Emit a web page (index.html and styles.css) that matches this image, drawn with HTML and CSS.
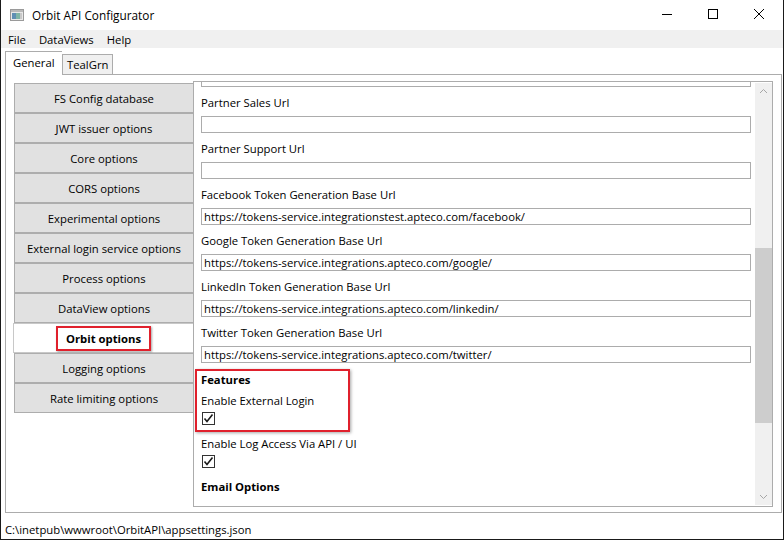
FILE: index.html
```html
<!DOCTYPE html>
<html lang="en">
<head>
  <meta charset="UTF-8">
  <title>Orbit API Configurator</title>
  <link rel="stylesheet" href="styles.css">
</head>
<body>
  <div class="window">
    <div class="titlebar">
      <svg class="app-icon" width="14" height="12" viewBox="0 0 14 12">
        <rect x="0.5" y="0.5" width="13" height="11" fill="#e8e8e8" stroke="#9a9a9a"/>
        <rect x="1" y="1" width="12" height="2" fill="#b9b9b9"/>
        <rect x="2" y="4" width="4" height="6" fill="#5f8fb4"/>
        <rect x="6" y="4" width="4" height="6" fill="#7fb5a6"/>
        <rect x="10" y="4" width="2" height="6" fill="#c8c8c8"/>
      </svg>
      <span class="title">Orbit API Configurator</span>
      <div class="controls">
        <svg width="46" height="30" viewBox="0 0 46 30"><line x1="18" y1="14.5" x2="28" y2="14.5" stroke="#000"/></svg>
        <svg width="46" height="30" viewBox="0 0 46 30"><rect x="18.5" y="9.5" width="9" height="9" fill="none" stroke="#000"/></svg>
        <svg width="46" height="30" viewBox="0 0 46 30"><path d="M18 9 L28 19 M28 9 L18 19" stroke="#000" stroke-width="1"/></svg>
      </div>
    </div>

    <div class="menubar">
      <span>File</span>
      <span>DataViews</span>
      <span>Help</span>
    </div>

    <div class="tabs">
      <div class="tabstrip">
        <div class="tab active">General</div>
        <div class="tab">TealGrn</div>
      </div>
      <div class="tabpanel">
        <div class="nav">
          <button>FS Config database</button>
          <button>JWT issuer options</button>
          <button>Core options</button>
          <button>CORS options</button>
          <button>Experimental options</button>
          <button>External login service options</button>
          <button>Process options</button>
          <button>DataView options</button>
          <button class="selected"><span class="mark">Orbit options</span></button>
          <button>Logging options</button>
          <button>Rate limiting options</button>
        </div>

        <div class="pane">
          <div class="scroll">
            <div class="content">
              <div class="textbox cut"></div>

              <div class="label">Partner Sales Url</div>
              <div class="textbox"></div>

              <div class="label">Partner Support Url</div>
              <div class="textbox"></div>

              <div class="label">Facebook Token Generation Base Url</div>
              <div class="textbox">https://tokens-service.integrationstest.apteco.com/facebook/</div>

              <div class="label">Google Token Generation Base Url</div>
              <div class="textbox">https://tokens-service.integrations.apteco.com/google/</div>

              <div class="label">LinkedIn Token Generation Base Url</div>
              <div class="textbox">https://tokens-service.integrations.apteco.com/linkedin/</div>

              <div class="label">Twitter Token Generation Base Url</div>
              <div class="textbox">https://tokens-service.integrations.apteco.com/twitter/</div>

              <div class="features">
                <div class="heading">Features</div>
                <div class="label small">Enable External Login</div>
                <div class="checkbox">
                  <svg width="11" height="11" viewBox="0 0 11 11"><path d="M1.5 5.5 L4 8.5 L9.5 1.5" fill="none" stroke="#1a1a1a" stroke-width="1.6"/></svg>
                </div>
              </div>

              <div class="label small">Enable Log Access Via API / UI</div>
              <div class="checkbox">
                <svg width="11" height="11" viewBox="0 0 11 11"><path d="M1.5 5.5 L4 8.5 L9.5 1.5" fill="none" stroke="#1a1a1a" stroke-width="1.6"/></svg>
              </div>

              <div class="heading email">Email Options</div>
            </div>
          </div>
          <div class="scrollbar">
            <svg class="arrow" width="17" height="17" viewBox="0 0 17 17"><path d="M5 10 L8.5 6.5 L12 10" fill="none" stroke="#a6a6a6"/></svg>
            <div class="track">
              <div class="thumb"></div>
            </div>
            <svg class="arrow" width="17" height="17" viewBox="0 0 17 17"><path d="M5 7 L8.5 10.5 L12 7" fill="none" stroke="#a6a6a6"/></svg>
          </div>
        </div>
      </div>
    </div>

    <div class="statusbar">C:\inetpub\wwwroot\OrbitAPI\appsettings.json</div>
  </div>
</body>
</html>
```

FILE: styles.css
```css
* {
  box-sizing: border-box;
}

body {
  margin: 0;
  padding: 0;
  background: #fff;
  font-family: "Open Sans", "Noto Sans", sans-serif;
  font-size: 11.3px;
  color: #000;
}

.window {
  width: 784px;
  height: 540px;
  border: 1px solid #1a1a1a;
  border-top: none;
  display: flex;
  flex-direction: column;
  overflow: hidden;
  background: #fff;
}

.titlebar {
  height: 30px;
  display: flex;
  align-items: center;
  padding-left: 9px;
}

.app-icon {
  margin-right: 8px;
}

.title {
  font-size: 11.8px;
  flex: 1;
}

.controls {
  display: flex;
  align-self: flex-start;
  margin-right: 1px;
}

.menubar {
  height: 18px;
  background: #f0f0f0;
  display: flex;
  align-items: center;
  padding-left: 7px;
}

.menubar span {
  margin-right: 13px;
}

.tabs {
  padding: 3px 1px 0 4px;
}

.tabstrip {
  display: flex;
  align-items: flex-end;
  height: 23px;
  position: relative;
  z-index: 1;
}

.tab {
  height: 20px;
  padding: 0 4px 0 4px;
  border: 1px solid #acacac;
  border-bottom: none;
  background: #f0f0f0;
  display: flex;
  align-items: center;
}

.tab.active {
  height: 24px;
  margin-bottom: -1px;
  padding: 0 7px 2px 7px;
  background: #fff;
  border-right: none;
  width: 57px;
}

.tabpanel {
  height: 439px;
  border: 1px solid #acacac;
  display: flex;
  padding: 6px 8px 0 8px;
}

.nav {
  width: 180px;
  margin-top: 2px;
  display: flex;
  flex-direction: column;
}

button {
  height: 30px;
  font-family: inherit;
  font-size: 11.3px;
  color: #000;
  background: #e1e1e1;
  border: 1px solid #adadad;
  padding: 0;
}

button.selected {
  background: #fff;
  border-color: #c8c8c8;
  margin-left: -1px;
  font-weight: bold;
}

.mark {
  display: inline-block;
  padding: 3px 8px;
  border: 2px solid #e0202c;
  box-shadow: 1px 1px 2px rgba(0, 0, 0, 0.35);
}

.pane {
  width: 580px;
  height: 426px;
  margin-left: -1px;
  border: 1px solid #acacac;
  display: flex;
}

.scroll {
  flex: 1;
  overflow: hidden;
  padding: 0 4px 0 7px;
}

.content {
  margin-top: -12px;
}

.textbox {
  height: 17px;
  width: 550px;
  border: 1px solid #acacac;
  padding: 0 2px;
  line-height: 15px;
  white-space: nowrap;
}

.label {
  line-height: 16px;
  margin: 8px 0 5px;
}

.features {
  width: 155px;
  margin-left: -6px;
  margin-top: 6px;
  padding: 1px 0 5px 4px;
  border: 2px solid #e0202c;
  box-shadow: 1px 1px 3px rgba(0, 0, 0, 0.35);
}

.heading {
  font-weight: bold;
  line-height: 16px;
}

.label.small {
  margin: 5px 0 3px;
}

.checkbox {
  width: 13px;
  height: 13px;
  border: 1px solid #333;
  display: flex;
  align-items: center;
  justify-content: center;
  margin-left: 1px;
}

.features + .label.small {
  margin-top: 4px;
}

.heading.email {
  margin-top: 11px;
}

.scrollbar {
  width: 17px;
  background: #f0f0f0;
  display: flex;
  flex-direction: column;
  margin: 1px 0 1px;
}

.track {
  flex: 1;
  position: relative;
}

.thumb {
  position: absolute;
  left: 0;
  right: 0;
  top: 148px;
  height: 175px;
  background: #cdcdcd;
}

.statusbar {
  padding: 9px 0 0 4px;
}
```
